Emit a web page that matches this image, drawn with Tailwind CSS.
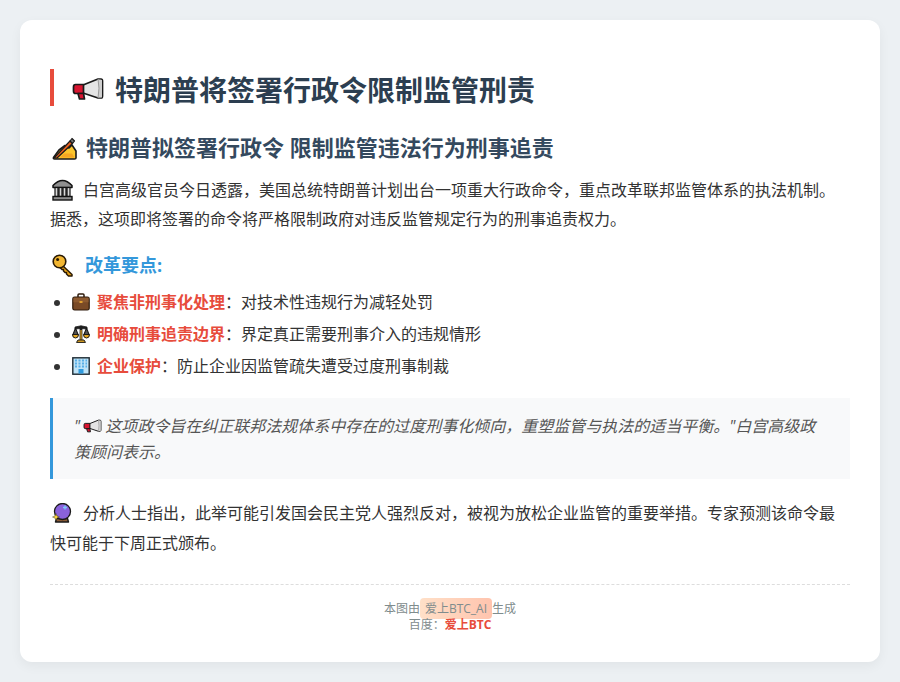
<!DOCTYPE html>
<html lang="zh-CN">
<head>
<meta charset="utf-8">
<script src="https://cdn.jsdelivr.net/npm/@tailwindcss/browser@4"></script>
<title>特朗普将签署行政令限制监管刑责</title>
</head>
<body class="bg-[#ecf0f3] p-5 text-[#333333] font-['Open_Sans','Noto_Sans_CJK_SC',sans-serif] text-base">
<svg class="absolute w-0 h-0" aria-hidden="true">
  <symbol id="mega" viewBox="0 0 32 24">
    <path d="M11 8 L26 2 H29 Q30.5 2 30.5 4 V19 Q30.5 21 29 21 H26 L11 16Z" fill="#e4e4e4" stroke="#1a1a1a" stroke-width="1.7" stroke-linejoin="round"/>
    <path d="M26 2.5 Q27.5 11 26 20.5 L30 20.5 V3Z" fill="#cfcfcf"/>
    <path d="M26 2 Q28 11 26 21" fill="none" stroke="#999" stroke-width="1"/>
    <path d="M3.5 7.5 H11.5 V16.5 H3.5 Q1.5 16.5 1.5 14 V10 Q1.5 7.5 3.5 7.5Z" fill="#d81530" stroke="#1a1a1a" stroke-width="1.7" stroke-linejoin="round"/>
    <path d="M6 16.5 L7.5 22 H12.5 L11.5 16.5Z" fill="#d81530" stroke="#1a1a1a" stroke-width="1.7" stroke-linejoin="round"/>
  </symbol>
  <symbol id="pen" viewBox="0 0 25 24">
    <path d="M1.5 21.5 L7 14 L13 9.5 L17 12 L20 9 L24 15 V22 Q24 23 22.5 23 H2.5 Q1 23 1.5 21.5Z" fill="#fcc62d" stroke="#1a1a1a" stroke-width="1.6" stroke-linejoin="round"/>
    <path d="M2 22 L18 5 L20.5 7.5 L5 22Z" fill="#e8601f" stroke="#1a1a1a" stroke-width="1.2" stroke-linejoin="round"/>
    <path d="M18 5 L20 2.5 L22.5 5 L20.5 7.5Z" fill="#777" stroke="#1a1a1a" stroke-width="1.2" stroke-linejoin="round"/>
    <path d="M12 17.5 H20 L22.5 21.5 H8Z" fill="#f5a623"/>
  </symbol>
  <symbol id="bank" viewBox="0 0 23 23">
    <path d="M2 7.5 Q11.5 -2.5 21 7.5 V9.5 H2Z" fill="#8f8f8f" stroke="#111" stroke-width="1.5" stroke-linejoin="round"/>
    <rect x="4" y="9.5" width="15" height="9" fill="#d9d9d9" stroke="#111" stroke-width="1.2"/>
    <path d="M7.5 10 V18 M11.5 10 V18 M15.5 10 V18" stroke="#222" stroke-width="2.4"/>
    <rect x="2" y="18.5" width="19" height="3.5" fill="#8f8f8f" stroke="#111" stroke-width="1.4"/>
  </symbol>
  <symbol id="key" viewBox="0 0 22 23">
    <path d="M10 11 L20 20.5 V22 H16.5 L14.5 20 L14.5 18.5 H13 L11.5 17 L11.5 15.5 H10 L7.5 13" fill="#e8a317" stroke="#2a1a05" stroke-width="1.5" stroke-linejoin="round"/>
    <circle cx="7.5" cy="7.5" r="6.3" fill="#f2b632" stroke="#2a1a05" stroke-width="1.6"/>
    <circle cx="5.6" cy="5.6" r="1.5" fill="#2a1a05"/>
  </symbol>
  <symbol id="case" viewBox="0 0 18 18">
    <path d="M6 4 V2 Q6 1 7 1 H11 Q12 1 12 2 V4" fill="none" stroke="#2e1b0c" stroke-width="1.5"/>
    <rect x="0.8" y="4" width="16.4" height="13" rx="1.8" fill="#7a4a26" stroke="#2e1b0c" stroke-width="1.2"/>
    <rect x="1.5" y="4.8" width="15" height="4.5" fill="#8d5a30"/>
    <rect x="7.5" y="8" width="3" height="2" fill="#e0a030"/>
  </symbol>
  <symbol id="scale" viewBox="0 0 18 18">
    <path d="M3 2 L9 0.8 L15 2 L15 4 L9 3.5 L3 4Z" fill="#1f1f1f" stroke="#1f1f1f" stroke-width=".8"/>
    <path d="M0.8 10 L3.5 3 L6.2 10Z M11.8 10 L14.5 3 L17.2 10Z" fill="#555" stroke="#1a1a1a" stroke-width="1.1" stroke-linejoin="round"/>
    <path d="M0.5 9.5 H6.5 Q6.5 13 3.5 13 Q.5 13 .5 9.5Z M11.5 9.5 H17.5 Q17.5 13 14.5 13 Q11.5 13 11.5 9.5Z" fill="#e5a823" stroke="#1a1a1a" stroke-width="1"/>
    <rect x="7.6" y="2" width="2.8" height="13.5" fill="#1f1f1f"/>
    <rect x="8.4" y="5" width="1.2" height="10" fill="#e5a823"/>
    <path d="M4.5 17.4 H13.5 L12 15 H6Z" fill="#e5a823" stroke="#1a1a1a" stroke-width="1"/>
  </symbol>
  <symbol id="bldg" viewBox="0 0 18 18">
    <rect x="0.8" y="0.8" width="16.4" height="16.4" fill="#bfe3f7" stroke="#1d2a33" stroke-width="1.4"/>
    <path d="M3 3.5 H5 M6.5 3.5 H8.5 M10 3.5 H12 M13.5 3.5 H15 M3 6.5 H5 M6.5 6.5 H8.5 M10 6.5 H12 M13.5 6.5 H15 M3 9.5 H5 M6.5 9.5 H8.5 M10 9.5 H12 M13.5 9.5 H15" stroke="#58aee6" stroke-width="1.8"/>
    <rect x="6.5" y="12" width="5" height="4.5" fill="#2f9be0"/>
  </symbol>
  <symbol id="ball" viewBox="0 0 20 20">
    <path d="M4.5 15.5 H15.5 L16.5 19 H3.5Z" fill="#8a5a34" stroke="#1a1a1a" stroke-width="1.4" stroke-linejoin="round"/>
    <circle cx="10.5" cy="8.5" r="8" fill="#8a62dc" stroke="#1a1a1a" stroke-width="1.3"/>
    <path d="M13 2.5 v4 M11 4.5 h4" stroke="#7cc8f8" stroke-width="1.3"/>
    <path d="M4 10.5 L5 13 L7.5 14 L5 15 L4 17.5 L3 15 L.5 14 L3 13Z" fill="#fbd33b" stroke="#1a1a1a" stroke-width=".4"/>
  </symbol>
</svg>
<div class="bg-white rounded-xl px-[30px] pt-[49px] h-[642px] shadow-[0_4px_12px_rgba(0,0,0,0.05)]">
  <h1 class="flex items-center border-l-4 border-[#e74c3c] pl-[18px] pt-[5px] text-[28px] font-bold leading-[32px] text-[#2c3e50]"><svg class="w-8 h-6 -mt-[3px] mr-[11px] shrink-0"><use href="#mega"/></svg>特朗普将签署行政令限制监管刑责</h1>
  <h2 class="flex items-center mt-[27px] pl-[2px] text-[22px] font-bold leading-[29px] text-[#34495e]"><svg class="w-[25px] h-6 mr-[9px] shrink-0"><use href="#pen"/></svg>特朗普拟签署行政令 限制监管违法行为刑事追责</h2>
  <p class="mt-[14px] leading-[29px]"><svg class="inline-block align-middle -mt-1 ml-px mr-[9px] w-[23px] h-[23px]"><use href="#bank"/></svg>白宫高级官员今日透露，美国总统特朗普计划出台一项重大行政命令，重点改革联邦监管体系的执法机制。据悉，这项即将签署的命令将严格限制政府对违反监管规定行为的刑事追责权力。</p>
  <h3 class="flex items-center mt-[19px] pl-[2px] text-lg font-bold leading-6 text-[#3498db]"><svg class="w-[22px] h-[23px] mr-[11px] shrink-0"><use href="#key"/></svg>改革要点:</h3>
  <ul class="list-disc pl-[22px] mt-[11px] leading-[29px] flex flex-col gap-[3px]">
    <li><svg class="inline-block align-middle -mt-[3px] mr-[7px] w-[18px] h-[18px]"><use href="#case"/></svg><strong class="text-[#e74c3c]">聚焦非刑事化处理</strong>：对技术性违规行为减轻处罚</li>
    <li><svg class="inline-block align-middle -mt-[3px] mr-[7px] w-[18px] h-[18px]"><use href="#scale"/></svg><strong class="text-[#e74c3c]">明确刑事追责边界</strong>：界定真正需要刑事介入的违规情形</li>
    <li><svg class="inline-block align-middle -mt-[3px] mr-[7px] w-[18px] h-[18px]"><use href="#bldg"/></svg><strong class="text-[#e74c3c]">企业保护</strong>：防止企业因监管疏失遭受过度刑事制裁</li>
  </ul>
  <blockquote class="mt-[17px] border-l-[3px] border-[#3498db] bg-[#f8f9fa] pl-[21px] pr-[22px] pt-[15px] pb-[14px] italic leading-[26px] text-[#555555]">"<svg class="inline-block align-middle -mt-[3px] mx-[3px] w-[19px] h-[14px]"><use href="#mega"/></svg>这项政令旨在纠正联邦法规体系中存在的过度刑事化倾向，重塑监管与执法的适当平衡。"白宫高级政策顾问表示。</blockquote>
  <p class="mt-[19px] leading-[30px]"><svg class="inline-block align-middle -mt-[3px] ml-[2px] mr-[11px] w-5 h-5"><use href="#ball"/></svg>分析人士指出，此举可能引发国会民主党人强烈反对，被视为放松企业监管的重要举措。专家预测该命令最快可能于下周正式颁布。</p>
  <footer class="mt-[26px] border-t border-dashed border-[#dddddd] pt-[16px] text-center text-xs leading-4 text-[#7f8c8d]">
    <div>本图由<span class="rounded-[4px] bg-gradient-to-r from-[#ffe0c8] to-[#ffc4ae] px-[5px] py-[2px]">爱上BTC_AI</span>生成</div>
    <div>百度：<strong class="text-[#e74c3c]">爱上BTC</strong></div>
  </footer>
</div>
</body>
</html>
